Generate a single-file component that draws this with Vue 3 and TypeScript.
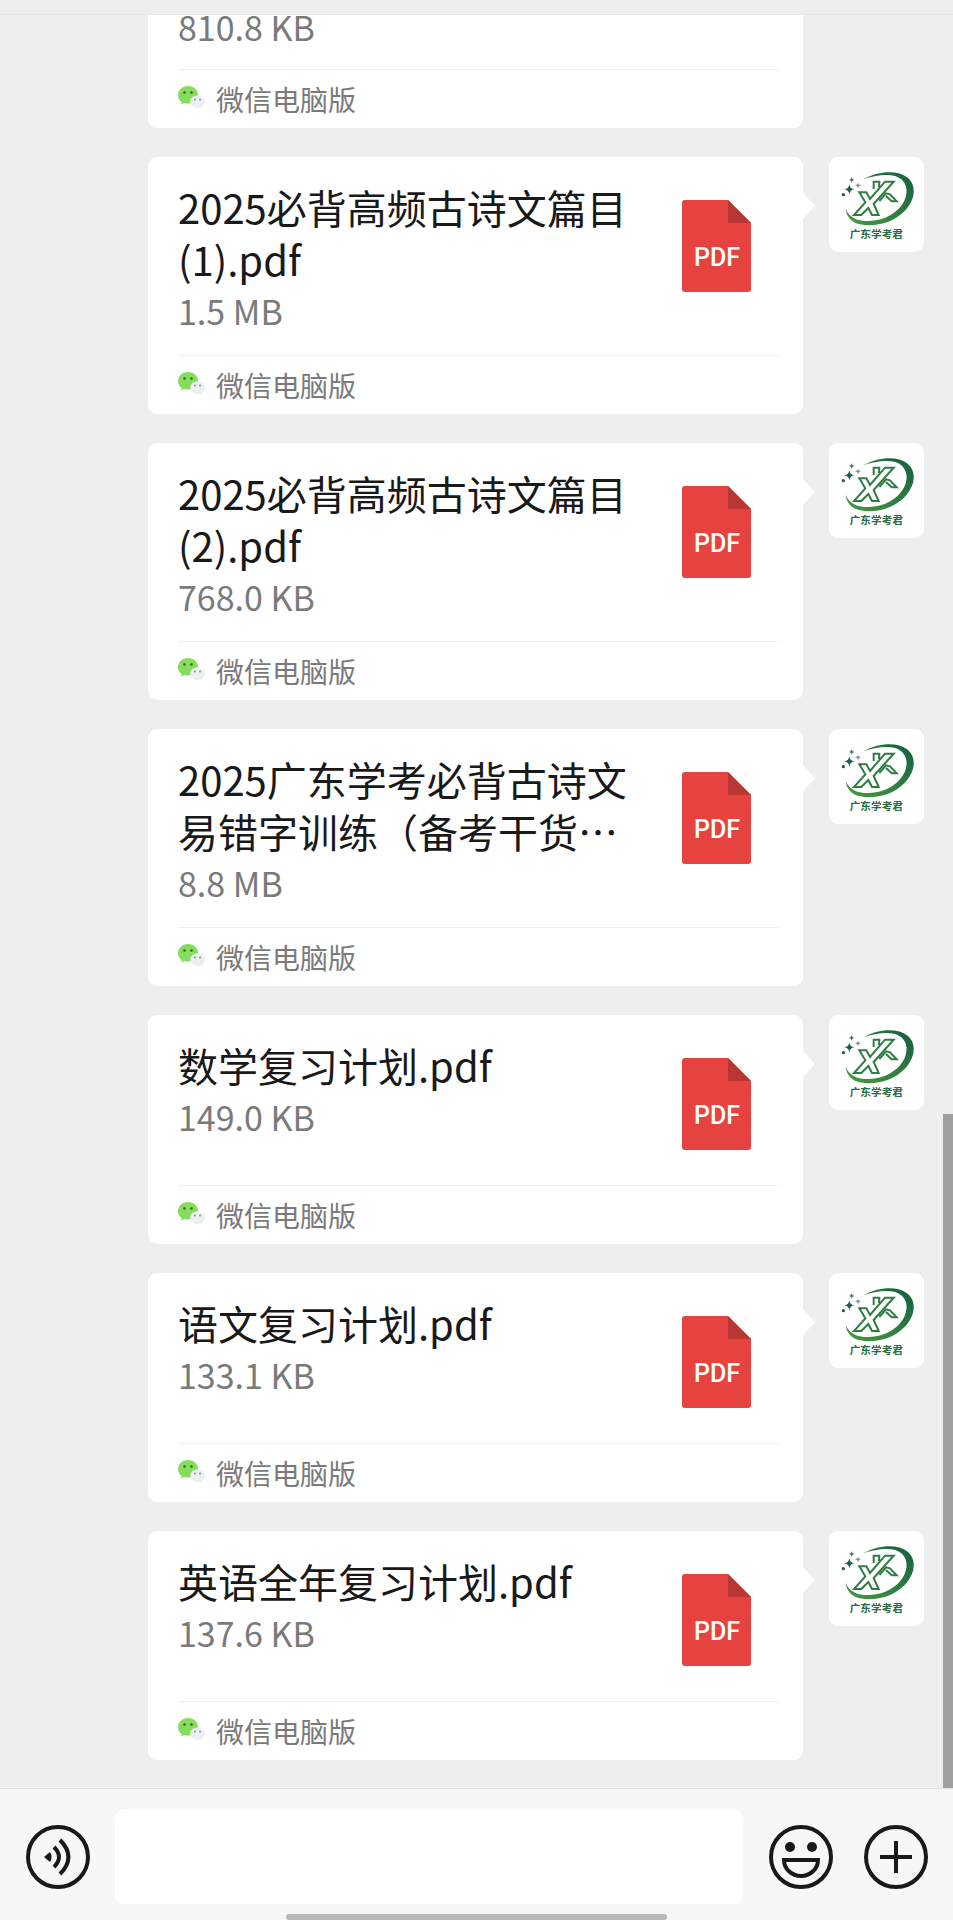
<script setup lang="ts">
interface FileMessage {
  id: number
  name?: string
  size: string
}

const source = '微信电脑版'

// The oldest message is scrolled partly out of view, so it starts at its size line.
const messages: FileMessage[] = [
  { id: 1, size: '810.8 KB' },
  { id: 2, name: '2025必背高频古诗文篇目(1).pdf', size: '1.5 MB' },
  { id: 3, name: '2025必背高频古诗文篇目(2).pdf', size: '768.0 KB' },
  { id: 4, name: '2025广东学考必背古诗文易错字训练（备考干货…', size: '8.8 MB' },
  { id: 5, name: '数学复习计划.pdf', size: '149.0 KB' },
  { id: 6, name: '语文复习计划.pdf', size: '133.1 KB' },
  { id: 7, name: '英语全年复习计划.pdf', size: '137.6 KB' },
]
</script>

<template>
  <div class="chat" lang="zh-CN">
    <header class="topbar"></header>

    <main class="history">
      <ul class="messages">
        <li v-for="m in messages" :key="m.id" class="message">
          <article class="card" :class="{ partial: !m.name }">
            <div class="body">
              <div class="info">
                <h2 v-if="m.name" class="name">{{ m.name }}</h2>
                <p class="size">{{ m.size }}</p>
              </div>
              <svg v-if="m.name" class="pdf" viewBox="0 0 69 92" role="img" aria-label="PDF">
                <path d="M3 0H46L69 23V89a3 3 0 0 1-3 3H3a3 3 0 0 1-3-3V3a3 3 0 0 1 3-3Z" fill="#e64340" />
                <path d="M46 0 69 23H46Z" fill="#b83633" />
                <text x="35" y="66" text-anchor="middle" class="pdf-label">PDF</text>
              </svg>
            </div>
            <footer class="origin">
              <svg class="wechat" viewBox="0 0 27 23" aria-hidden="true">
                <path d="M10 0C4.300 0 0 4 0 9c0 3 1.400 5.400 3.600 7L3 18.500l3.400-1.400c1.200.4 2.400.5 3.600.5 5.700 0 10-3.800 10-8.700S15.700 0 10 0Z" fill="#86dc5c" />
                <circle cx="6.500" cy="6.500" r="1.300" fill="#2f6b26" />
                <circle cx="13.500" cy="6.500" r="1.300" fill="#2f6b26" />
                <path d="M19.500 9.500c-4.200 0-7.300 2.700-7.300 6.200s3.100 6.300 7.300 6.300c.9 0 1.800-.1 2.600-.4l2.400 1.200-.5-2.200c1.800-1.100 3-2.900 3-4.900 0-3.500-3.300-6.200-7.500-6.200Z" fill="#eceff1" />
                <circle cx="17" cy="13.500" r="1" fill="#8a8f92" />
                <circle cx="22" cy="13.500" r="1" fill="#8a8f92" />
              </svg>
              <span>{{ source }}</span>
            </footer>
          </article>

          <svg v-if="m.name" class="avatar" viewBox="0 0 285 285" role="img" aria-label="广东学考君">
            <defs>
              <linearGradient :id="`leaf-${m.id}`" x1="0" y1="1" x2="1" y2="0">
                <stop offset="0" stop-color="#4a9a42" />
                <stop offset="1" stop-color="#14603f" />
              </linearGradient>
            </defs>
            <path
              d="M103 67C148 42 205 38 236 62C264 86 259 128 227 162C192 198 137 211 93 202C67 196 52 178 50 155C60 181 85 193 119 192C166 191 209 167 226 131C241 98 231 68 199 57C172 50 135 55 103 67Z"
              :fill="`url(#leaf-${m.id})`"
            />
            <g fill="none" stroke="#2f7d43" stroke-width="6" stroke-linejoin="miter">
              <path d="M91 106H112L123 126L168 74H194L134 141L149 174H129L118 153L97 174H75L109 136Z" />
              <path d="M134 96V74H151L150 90" />
              <path d="M151 132L171 109L183 112L203 133H188L171 117" />
            </g>
            <path d="M61 81Q62 95 76 97Q62 99 61 113Q60 99 46 97Q60 95 61 81Z" fill="#1e5c55" />
            <path d="M68 61Q69 68 76 69Q69 70 68 77Q67 70 60 69Q67 68 68 61Z" fill="#45706c" />
            <path d="M87 77Q88 84 96 85Q88 86 87 94Q86 86 78 85Q86 84 87 77Z" fill="#7a9a94" />
            <circle cx="43" cy="113" r="5" fill="#2b5d4b" />
            <text x="142" y="242" text-anchor="middle" class="avatar-label">广东学考君</text>
          </svg>
        </li>
      </ul>
      <span class="scrollbar" aria-hidden="true"></span>
    </main>

    <footer class="composer">
      <div class="controls">
        <button type="button" class="round" aria-label="语音">
          <svg viewBox="0 0 64 64" fill="none" stroke="#191919" stroke-width="4">
            <circle cx="32" cy="32" r="30" />
            <path d="M18 32L24 27Q27 32 24 37Z" fill="#191919" stroke="none" />
            <path d="M28 22Q38 32 28 42M34 15Q51 32 34 49" />
          </svg>
        </button>
        <input class="entry" type="text" aria-label="消息" />
        <button type="button" class="round" aria-label="表情">
          <svg viewBox="0 0 64 64" fill="none" stroke="#191919" stroke-width="4">
            <circle cx="32" cy="32" r="30" />
            <circle cx="21" cy="22" r="5" fill="#191919" stroke="none" />
            <circle cx="43" cy="22" r="5" fill="#191919" stroke="none" />
            <path d="M15 35H49A17 16 0 0 1 15 35Z" />
          </svg>
        </button>
        <button type="button" class="round" aria-label="更多">
          <svg viewBox="0 0 64 64" fill="none" stroke="#191919" stroke-width="4">
            <circle cx="32" cy="32" r="30" />
            <path d="M32 16V48M16 32H48" />
          </svg>
        </button>
      </div>
      <div class="home-bar"></div>
    </footer>
  </div>
</template>

<style>
body {
  margin: 0;
}
</style>

<style scoped>
.chat {
  display: flex;
  flex-direction: column;
  height: 100vh;
  background: #eee;
  font-family: "Noto Sans CJK SC", "Noto Sans", sans-serif;
  color: #191919;
}

.topbar {
  flex: none;
  height: 14px;
  border-bottom: 1px solid #e8e8e8;
}

.history {
  position: relative;
  flex: 1;
  min-height: 0;
  display: flex;
  flex-direction: column;
  justify-content: flex-end;
  overflow: hidden;
}

.messages {
  display: flex;
  flex-direction: column;
  gap: 29px;
  margin: 0;
  padding: 0 29px 28px 148px;
  list-style: none;
}

.message {
  display: grid;
  grid-template-columns: minmax(0, 1fr) 95px;
  column-gap: 26px;
  align-items: start;
}

.card {
  position: relative;
  border-radius: 9px;
  background: #fff;
}

.card:not(.partial)::after {
  content: "";
  position: absolute;
  top: 36px;
  left: 100%;
  width: 12px;
  height: 26px;
  background: #fff;
  clip-path: polygon(0 0, 100% 50%, 0 100%);
}

.body {
  display: flex;
  justify-content: space-between;
  gap: 44px;
  padding: 0 52px 0 30px;
}

.info {
  flex: 1;
  min-width: 0;
  padding: 24px 0 18px;
}

.partial .info {
  padding: 0 0 16px;
}

.name {
  margin: 0;
  font-size: 40px;
  font-weight: 400;
  line-height: 52px;
}

.size {
  margin: 0;
  font-size: 34px;
  line-height: 52px;
  color: #7a7a7a;
}

.pdf {
  flex: none;
  width: 69px;
  height: 92px;
  margin: 43px 0 35px;
}

.pdf-label {
  font-family: Roboto, "Noto Sans", sans-serif;
  font-size: 25px;
  font-weight: 500;
  fill: #fff;
}

.origin {
  display: flex;
  align-items: center;
  gap: 11px;
  height: 58px;
  margin: 0 24px 0 30px;
  border-top: 1px solid #efefef;
  font-size: 28px;
  line-height: 40px;
  color: #7a7a7a;
}

.wechat {
  width: 27px;
  height: 23px;
  margin-bottom: 4px;
}

.avatar {
  width: 95px;
  height: 95px;
  border-radius: 9px;
  background: #fff;
}

.avatar-label {
  font-size: 32px;
  font-weight: 700;
  fill: #2c6b45;
}

.scrollbar {
  position: absolute;
  right: 0;
  bottom: 0;
  width: 10px;
  height: 38%;
  background: #a0a0a0;
}

.composer {
  flex: none;
  border-top: 1px solid #dfdfdf;
  background: #f7f7f7;
}

.controls {
  display: flex;
  align-items: center;
  gap: 31px;
  padding: 20px 25px 10px 26px;
}

.round {
  flex: none;
  width: 64px;
  height: 64px;
  padding: 0;
  border: 0;
  background: none;
}

.round svg {
  display: block;
  width: 64px;
  height: 64px;
}

.entry {
  flex: 1;
  min-width: 0;
  height: 95px;
  box-sizing: border-box;
  margin-right: -5px;
  margin-left: -6px;
  padding: 0 20px;
  border: 0;
  border-radius: 9px;
  background: #fff;
  font: inherit;
  font-size: 40px;
}

.home-bar {
  width: 40%;
  height: 6px;
  margin: 0 auto;
  border-radius: 3px;
  background: #b8b8b8;
}
</style>
